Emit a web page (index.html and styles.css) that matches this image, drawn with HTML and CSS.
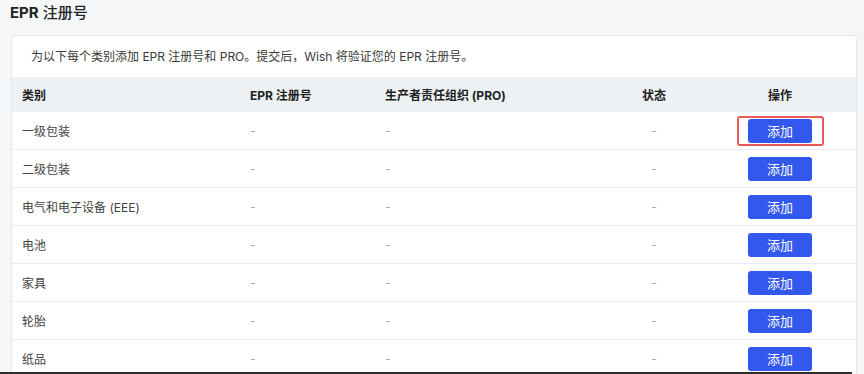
FILE: index.html
```html
<!DOCTYPE html>
<html lang="zh-CN">
<head>
  <meta charset="UTF-8" />
  <title>EPR 注册号</title>
  <link rel="stylesheet" href="styles.css">
</head>
<body>
  <h1 class="page-title"><b>EPR</b> 注册号</h1>

  <div class="card">
    <p class="intro">为以下每个类别添加 EPR 注册号和 PRO。提交后，Wish 将验证您的 EPR 注册号。</p>
    <table class="epr-table">
      <colgroup>
        <col class="c-cat"><col class="c-epr"><col class="c-pro"><col class="c-state"><col class="c-op">
      </colgroup>
      <thead>
        <tr>
          <th>类别</th>
          <th>EPR 注册号</th>
          <th>生产者责任组织 (PRO)</th>
          <th class="center">状态</th>
          <th class="center">操作</th>
        </tr>
      </thead>
      <tbody>
        <tr>
          <td>一级包装</td><td class="dash">-</td><td class="dash">-</td><td class="dash center">-</td>
          <td class="center"><button class="btn marked">添加</button></td>
        </tr>
        <tr>
          <td>二级包装</td><td class="dash">-</td><td class="dash">-</td><td class="dash center">-</td>
          <td class="center"><button class="btn">添加</button></td>
        </tr>
        <tr>
          <td>电气和电子设备 (EEE)</td><td class="dash">-</td><td class="dash">-</td><td class="dash center">-</td>
          <td class="center"><button class="btn">添加</button></td>
        </tr>
        <tr>
          <td>电池</td><td class="dash">-</td><td class="dash">-</td><td class="dash center">-</td>
          <td class="center"><button class="btn">添加</button></td>
        </tr>
        <tr>
          <td>家具</td><td class="dash">-</td><td class="dash">-</td><td class="dash center">-</td>
          <td class="center"><button class="btn">添加</button></td>
        </tr>
        <tr>
          <td>轮胎</td><td class="dash">-</td><td class="dash">-</td><td class="dash center">-</td>
          <td class="center"><button class="btn">添加</button></td>
        </tr>
        <tr>
          <td>纸品</td><td class="dash">-</td><td class="dash">-</td><td class="dash center">-</td>
          <td class="center"><button class="btn">添加</button></td>
        </tr>
      </tbody>
    </table>
  </div>

  <div class="edge"></div>
</body>
</html>
```

FILE: styles.css
```css
html, body {
  height: 100%;
  overflow: hidden;
}
body {
  margin: 0;
  padding: 0;
  font-family: Inter, 'Noto Sans CJK SC', sans-serif;
  background: #f5f6f8;
  color: #333;
}
.page-title {
  margin: 0;
  padding: 4px 0 0 10px;
  height: 31px;
  font-size: 15px;
  font-weight: 500;
  line-height: 18px;
  color: #222;
}
.page-title b {
  font-weight: 700;
}
.card {
  margin: 0 7px 0 11px;
  background: #fff;
  border: 1px solid #e2e8ee;
  border-radius: 4px;
}
.intro {
  margin: 0;
  height: 41px;
  padding-left: 19px;
  font-size: 12px;
  line-height: 41px;
  color: #3a3a3a;
}
.epr-table {
  width: 100%;
  border-collapse: collapse;
  table-layout: fixed;
  font-size: 12px;
}
.c-cat { width: 228px; }
.c-epr { width: 135px; }
.c-pro { width: 229px; }
.c-state { width: 104px; }
.c-op { width: 148px; }
th, td {
  padding: 0 0 0 10px;
  text-align: left;
}
th {
  height: 34px;
  background: #edf1f4;
  font-weight: 700;
  color: #222;
}
td {
  height: 37px;
  border-top: 1px solid #e8edf1;
  color: #444;
}
.center {
  text-align: center;
  padding: 0 4px 0 0;
}
.dash {
  color: #aaa;
}
.btn {
  position: relative;
  width: 64px;
  height: 24px;
  padding: 0;
  border: none;
  border-radius: 3px;
  background: #3358ee;
  color: #fff;
  font-family: inherit;
  font-size: 13px;
  cursor: pointer;
}
.btn.marked::after {
  content: '';
  position: absolute;
  left: -11px;
  right: -12px;
  top: -3px;
  bottom: -3px;
  border: 2px solid #e85a5a;
  border-radius: 3px;
}
.edge {
  position: fixed;
  left: 0;
  bottom: 0;
  width: 852px;
  height: 2px;
  background: #2d2d2d;
}
```
